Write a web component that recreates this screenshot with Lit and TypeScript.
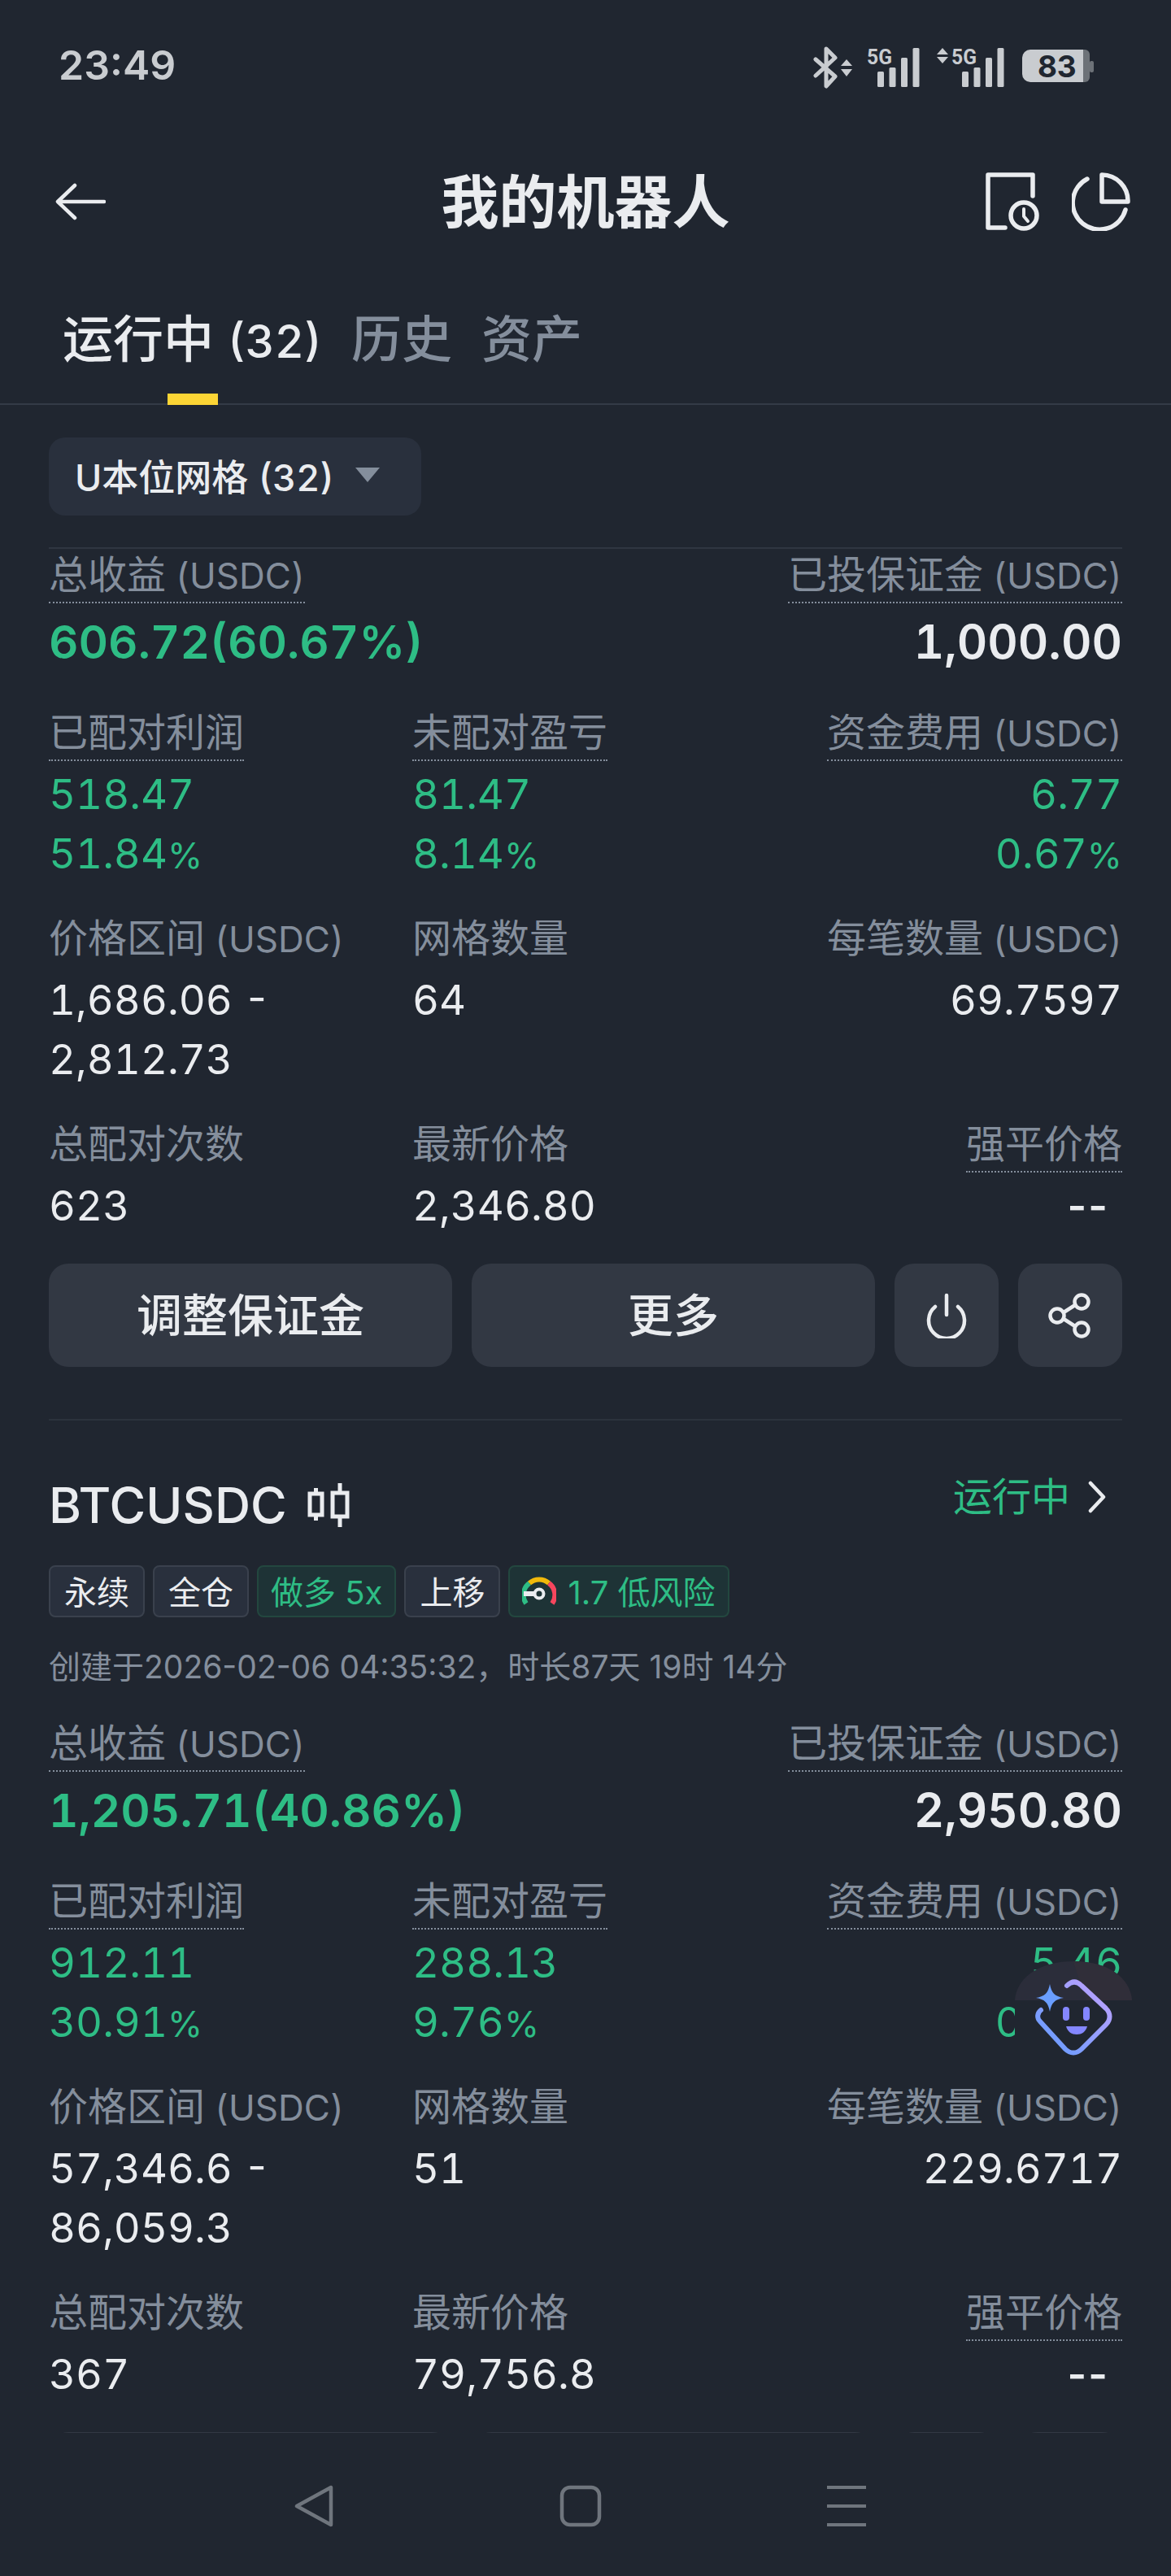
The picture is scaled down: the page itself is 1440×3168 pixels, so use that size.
import { LitElement, html, css, svg, nothing } from "lit";
import { customElement } from "lit/decorators.js";

interface Cell { label: string; unit?: string; dotted?: boolean; values: string[]; green?: boolean; dash?: boolean }
interface Card { total: string; margin: string; rows: Cell[][] }

const cards: Card[] = [
  {
    total: "606.72(60.67%)", margin: "1,000.00",
    rows: [
      [
        { label: "已配对利润", dotted: true, values: ["518.47", "51.84%"], green: true },
        { label: "未配对盈亏", dotted: true, values: ["81.47", "8.14%"], green: true },
        { label: "资金费用", unit: " (USDC)", dotted: true, values: ["6.77", "0.67%"], green: true },
      ],
      [
        { label: "价格区间", unit: " (USDC)", values: ["1,686.06 -", "2,812.73"] },
        { label: "网格数量", values: ["64"] },
        { label: "每笔数量", unit: " (USDC)", values: ["69.7597"] },
      ],
      [
        { label: "总配对次数", values: ["623"] },
        { label: "最新价格", values: ["2,346.80"] },
        { label: "强平价格", dotted: true, values: ["--"], dash: true },
      ],
    ],
  },
  {
    total: "1,205.71(40.86%)", margin: "2,950.80",
    rows: [
      [
        { label: "已配对利润", dotted: true, values: ["912.11", "30.91%"], green: true },
        { label: "未配对盈亏", dotted: true, values: ["288.13", "9.76%"], green: true },
        { label: "资金费用", unit: " (USDC)", dotted: true, values: ["5.46", "0.18%"], green: true },
      ],
      [
        { label: "价格区间", unit: " (USDC)", values: ["57,346.6 -", "86,059.3"] },
        { label: "网格数量", values: ["51"] },
        { label: "每笔数量", unit: " (USDC)", values: ["229.6717"] },
      ],
      [
        { label: "总配对次数", values: ["367"] },
        { label: "最新价格", values: ["79,756.8"] },
        { label: "强平价格", dotted: true, values: ["--"], dash: true },
      ],
    ],
  },
];

@customElement("app-root")
export class AppRoot extends LitElement {
  static styles = css`
    :host {
      display: block; width: 1440px; height: 3168px; overflow: hidden; position: relative;
      background: #202630; color: #eaecef;
      font-family: "Inter", "Noto Sans CJK SC", sans-serif;
      font-variant-numeric: tabular-nums;
    }
    * { box-sizing: border-box; }
    .page { display: flex; flex-direction: column; height: 3168px; }
    .status { height: 160px; flex: none; display: flex; justify-content: space-between; align-items: flex-start; padding: 52px 95px 0 72px; }
    .time { font-size: 50px; line-height: 56px; font-weight: 600; color: #c9ccd0; font-variant-numeric: normal; }
    .status svg { display: block; margin-top: 3px; }
    .header { height: 172px; flex: none; display: flex; align-items: center; justify-content: space-between; padding: 4px 50px 0 68px; position: relative; }
    .title { position: absolute; left: 0; right: 0; text-align: center; font-size: 71px; font-weight: 600; line-height: 90px; }
    .actions { display: flex; gap: 38px; position: relative; }
    svg { display: block; flex: none; }
    .tabs { height: 166px; flex: none; border-bottom: 2px solid #333b47; display: flex; gap: 36px; padding: 54px 0 0 77px; font-size: 62px; line-height: 64px; color: #848e9c; font-weight: 500; position: relative; }
    .tabs .on { color: #eaecef; }
    .tabs small { font-size: 56px; line-height: 0; }
    .tabs .bar { position: absolute; left: 206px; bottom: -2px; width: 62px; height: 14px; background: #fcd535; }
    .filter { flex: none; padding: 40px 60px 0; height: 178px; position: relative; }
    .drop { width: 458px; height: 96px; border-radius: 20px; background: #29303d; display: flex; align-items: center; padding: 0 0 4px 32px; gap: 26px; font-size: 45px; font-weight: 500; }
    .rule { height: 2px; background: #2f3641; margin: 39px 0 0; }
    .scroll { flex: 1; min-height: 0; padding: 0 60px; }
    .card.first { margin-top: -2px; }
    .grid { display: grid; grid-template-columns: 447px 1fr auto; margin-bottom: 35px; }
    .grid:nth-last-of-type(1) { margin-bottom: 34px; }
    .big-row { display: flex; justify-content: space-between; margin-bottom: 35px; }
    .cell { display: flex; flex-direction: column; align-items: flex-start; }
    .cell.right { align-items: flex-end; }
    .lbl { font-size: 48px; line-height: 66px; height: 68px; color: #848e9c; border-bottom: 2px solid transparent; }
    .lbl .unit { font-size: 44px; line-height: 0; }
    .lbl.dot { border-bottom: 2px dotted #848e9c; }
    .val { font-size: 51px; line-height: 73px; color: #eaecef; }
    .val .pct { font-size: 44px; line-height: 0; }
    .cell .val:first-of-type { margin-top: 4px; }
    .val.green { color: #2ebd85; }
    .val.dash { padding-right: 16px; letter-spacing: 2px; font-variant-numeric: normal; font-weight: 600; }
    .big { font-size: 58px; line-height: 87px; font-weight: 600; margin-top: 4px; color: #eaecef; }
    .big.green { color: #2ebd85; font-size: 56.5px; }
    .btns { display: flex; gap: 24px; }
    .btn { height: 127px; border-radius: 24px; background: #323843; display: flex; align-items: center; justify-content: center; font-size: 56px; font-weight: 500; }
    .btn.wide { width: 496px; padding-bottom: 8px; }
    .btn.sq { width: 128px; }
    .divider { height: 2px; background: #2b323c; margin: 64px 0 0; }
    .title-row { display: flex; justify-content: space-between; align-items: flex-start; padding-top: 70px; height: 178px; }
    .sym { display: flex; align-items: center; gap: 24px; font-size: 61px; line-height: 68px; font-weight: 500; }
    .state { display: flex; align-items: center; gap: 22px; color: #2ebd85; font-size: 48px; line-height: 60px; padding-right: 20px; margin-top: -6px; }
    .tags { display: flex; gap: 10px; height: 64px; font-variant-numeric: normal; }
    .tag { height: 64px; border-radius: 8px; border: 2px solid #3a414d; background: #29303d; display: flex; align-items: center; padding: 0 17px 2px; font-size: 40px; gap: 14px; }
    .tag.g { color: #2ebd85; background: #1e3336; border-color: #23473f; padding: 0 15px 2px; }
    .created { font-size: 39px; line-height: 54px; color: #848e9c; margin: 34px 0; font-variant-numeric: normal; }
    .nav { flex: none; height: 176px; background: #202630; display: flex; align-items: flex-start; padding: 64px 0 0 361px; gap: 277px; position: relative; z-index: 1; }
    .bot { position: absolute; left: 1248px; top: 2412px; width: 144px; height: 130px; z-index: 2; }
  `;

  private statusIcons() {
    const bars = (x0: number, step: number) =>
      [85, 80, 68, 56].map((y, i) => svg`<rect x=${x0 + i * step} y=${y - 52} width="8" height=${104 - y} rx="1.5" fill="#c9ccd0"/>`);
    return html`<svg width="345" height="56" viewBox="0 0 345 56">
      <path d="M3 17 L27 38 L16 50 V4 L27 15 L3 37" transform="translate(0,1)" fill="none" stroke="#c9ccd0" stroke-width="5" stroke-linejoin="round" stroke-linecap="round"/>
      <path d="M41 18 L48 26 H34 Z M41 39 L48 30 H34 Z" fill="#c9ccd0"/>
      <text x="66" y="24" font-size="25" font-weight="700" fill="#c9ccd0" font-family="Roboto, sans-serif" textLength="31" lengthAdjust="spacingAndGlyphs">5G</text>
      ${bars(79, 14.5)}
      <path d="M159 4 L166 12 H152 Z M159 23 L166 15 H152 Z" fill="#c9ccd0"/>
      <text x="170" y="24" font-size="25" font-weight="700" fill="#c9ccd0" font-family="Roboto, sans-serif" textLength="31" lengthAdjust="spacingAndGlyphs">5G</text>
      ${bars(183, 14.5)}
      <path d="M332 6 H334 a6 6 0 0 1 6 6 V40 a6 6 0 0 1 -6 6 H332 Z" fill="#6d7278"/>
      <rect x="340" y="20" width="5" height="14" rx="2" fill="#6d7278"/>
      <path d="M267 6 H332 V46 H267 a10 10 0 0 1 -10 -10 V16 a10 10 0 0 1 10 -10 Z" fill="#c9ccd0"/>
      <text x="300" y="40" text-anchor="middle" font-size="37" font-weight="700" fill="#202630" font-family="Inter, sans-serif">83</text>
    </svg>`;
  }

  private value(v: string) {
    return v.endsWith("%") ? html`${v.slice(0, -1)}<span class="pct">%</span>` : v;
  }

  private cell(c: Cell, right = false) {
    return html`<div class="cell ${right ? "right" : ""}">
      <span class="lbl ${c.dotted ? "dot" : ""}">${c.label}${c.unit ? html`<span class="unit">${c.unit}</span>` : nothing}</span>
      ${c.values.map((v) => html`<div class="val ${c.green ? "green" : ""} ${c.dash ? "dash" : ""}">${this.value(v)}</div>`)}
    </div>`;
  }

  private stats(card: Card) {
    return html`
      <div class="big-row">
        <div class="cell"><span class="lbl dot">总收益<span class="unit"> (USDC)</span></span><div class="big green">${card.total}</div></div>
        <div class="cell right"><span class="lbl dot">已投保证金<span class="unit"> (USDC)</span></span><div class="big">${card.margin}</div></div>
      </div>
      ${card.rows.map((r) => html`<div class="grid">${this.cell(r[0])}${this.cell(r[1])}${this.cell(r[2], true)}</div>`)}
      <div class="btns">
        <div class="btn wide">调整保证金</div>
        <div class="btn wide">更多</div>
        <div class="btn sq">
          <svg width="52" height="56" viewBox="0 0 52 56" fill="none" stroke="#eaecef" stroke-width="4.5" stroke-linecap="round"><path d="M26 3 V27"/><path d="M12 17 A22 22 0 1 0 40 17" /></svg>
        </div>
        <div class="btn sq">
          <svg width="54" height="56" viewBox="0 0 54 56" fill="none" stroke="#eaecef" stroke-width="4.5"><circle cx="41" cy="11" r="8.5"/><circle cx="11" cy="28" r="8.5"/><circle cx="41" cy="45" r="8.5"/><path d="M19 24 L33 15 M19 32 L33 41"/></svg>
        </div>
      </div>`;
  }

  render() {
    return html`
      <div class="page">
        <div class="status">
          <div class="time">23:49</div>
          ${this.statusIcons()}
        </div>
        <div class="header">
          <svg width="62" height="46" viewBox="0 0 62 46" fill="none" stroke="#eaecef" stroke-width="4.5" stroke-linecap="round" stroke-linejoin="round"><path d="M60 23 H4 M24 3 L3 23 L24 43"/></svg>
          <div class="title">我的机器人</div>
          <div class="actions">
            <svg width="68" height="72" viewBox="0 0 68 72" fill="none" stroke="#eaecef" stroke-width="5.5" stroke-linecap="round" stroke-linejoin="round">
              <path d="M24 68 H3 V3 H58 V29"/><circle cx="47" cy="53" r="16"/><path d="M47 45 L47 54 L52 60" stroke-width="4"/>
            </svg>
            <svg width="72" height="72" viewBox="0 0 72 72" fill="none" stroke="#eaecef" stroke-width="5.5" stroke-linecap="round" stroke-linejoin="round">
              <path d="M37 3 V36 H69 A32 32 0 0 0 37 3 Z"/><path d="M19 8 A33 33 0 1 0 66 46"/>
            </svg>
          </div>
        </div>
        <div class="tabs">
          <span class="on">运行中 <small>(32)</small></span><span>历史</span><span>资产</span>
          <div class="bar"></div>
        </div>
        <div class="filter">
          <div class="drop">
            <span>U本位网格 (32)</span>
            <svg width="30" height="18" viewBox="0 0 30 18"><path d="M0 0 H30 L15 18 Z" fill="#848e9c"/></svg>
          </div>
          <div class="rule"></div>
        </div>
        <div class="scroll">
          <div class="card first">${this.stats(cards[0])}</div>
          <div class="divider"></div>
          <div class="card">
            <div class="title-row">
              <div class="sym">BTCUSDC
                <svg width="54" height="54" viewBox="0 0 54 54" fill="none" stroke="#eaecef" stroke-width="5"><rect x="4" y="13" width="15" height="26"/><path d="M11.5 6 V13 M11.5 39 V46"/><rect x="32" y="12" width="18" height="29"/><path d="M41 0 V12 M41 41 V54"/></svg>
              </div>
              <div class="state">运行中
                <svg width="22" height="40" viewBox="0 0 22 40" fill="none" stroke="#eaecef" stroke-width="4.5" stroke-linecap="round" stroke-linejoin="round"><path d="M3 3 L19 20 L3 37"/></svg>
              </div>
            </div>
            <div class="tags">
              <div class="tag">永续</div>
              <div class="tag">全仓</div>
              <div class="tag g">做多 5x</div>
              <div class="tag">上移</div>
              <div class="tag g">
                <svg width="42" height="36" viewBox="0 0 42 36" fill="none" stroke-width="6">
                  <path d="M5 34 A18 18 0 0 1 9 9" stroke="#2ebd85"/><path d="M9 9 A18 18 0 0 1 33 9" stroke="#f0b90b"/><path d="M33 9 A18 18 0 0 1 37 34" stroke="#f6465d"/>
                  <circle cx="21" cy="22" r="5.5" stroke="#eaecef" stroke-width="4"/><path d="M2 22 H16" stroke="#eaecef" stroke-width="6"/>
                </svg>
                <span>1.7 低风险</span>
              </div>
            </div>
            <div class="created">创建于2026-02-06 04:35:32，时长87天 19时 14分</div>
            ${this.stats(cards[1])}
          </div>
        </div>
        <div class="nav">
          <svg width="50" height="52" viewBox="0 0 50 52" fill="none" stroke="#6f757d" stroke-width="4.5" stroke-linejoin="round"><path d="M46 3 V49 L4 26 Z"/></svg>
          <svg width="52" height="52" viewBox="0 0 52 52" fill="none" stroke="#6f757d" stroke-width="4.5"><rect x="3" y="3" width="46" height="46" rx="10"/></svg>
          <svg width="50" height="52" viewBox="0 0 50 52" fill="#6f757d"><rect x="0" y="1" width="48" height="4"/><rect x="0" y="24" width="48" height="4"/><rect x="0" y="47" width="48" height="4"/></svg>
        </div>
      </div>
      <svg class="bot" viewBox="0 0 144 130" width="144" height="130">
        <defs>
          <linearGradient id="g" x1="0" y1="1" x2="1" y2="0"><stop offset="0" stop-color="#5f9bff"/><stop offset="1" stop-color="#c4a2ff"/></linearGradient>
        </defs>
        <rect x="0" y="46" width="144" height="84" fill="#202630"/>
        <path d="M0 48 C2 20 30 0 72 0 C114 0 142 20 144 48 Z" fill="#2b2d3a"/>
        <path d="M72 0 C114 0 142 20 144 48 H88 C82 30 76 15 72 0 Z" fill="#302e39"/>
        <path d="M32 62 C27 66 27 72 31 76 L62 110 C68 116 76 116 82 110 L112 80 C118 74 118 66 112 60 L82 32 C76 26 70 26 64 32" fill="none" stroke="url(#g)" stroke-width="6" stroke-linecap="round" transform="translate(0,-2)"/>
        <path d="M43 28 C45 39 49 43 60 45 C49 47 45 51 43 62 C41 51 37 47 26 45 C37 43 41 39 43 28 Z" fill="#6a9eff"/>
        <rect x="59" y="56" width="8" height="17" rx="4" fill="#8487ff"/><rect x="84" y="56" width="8" height="17" rx="4" fill="#8487ff"/>
        <path d="M63 80 H89 C87 87 82 90 76 90 C70 90 65 87 63 80 Z" fill="#8487ff"/>
      </svg>
    `;
  }
}
